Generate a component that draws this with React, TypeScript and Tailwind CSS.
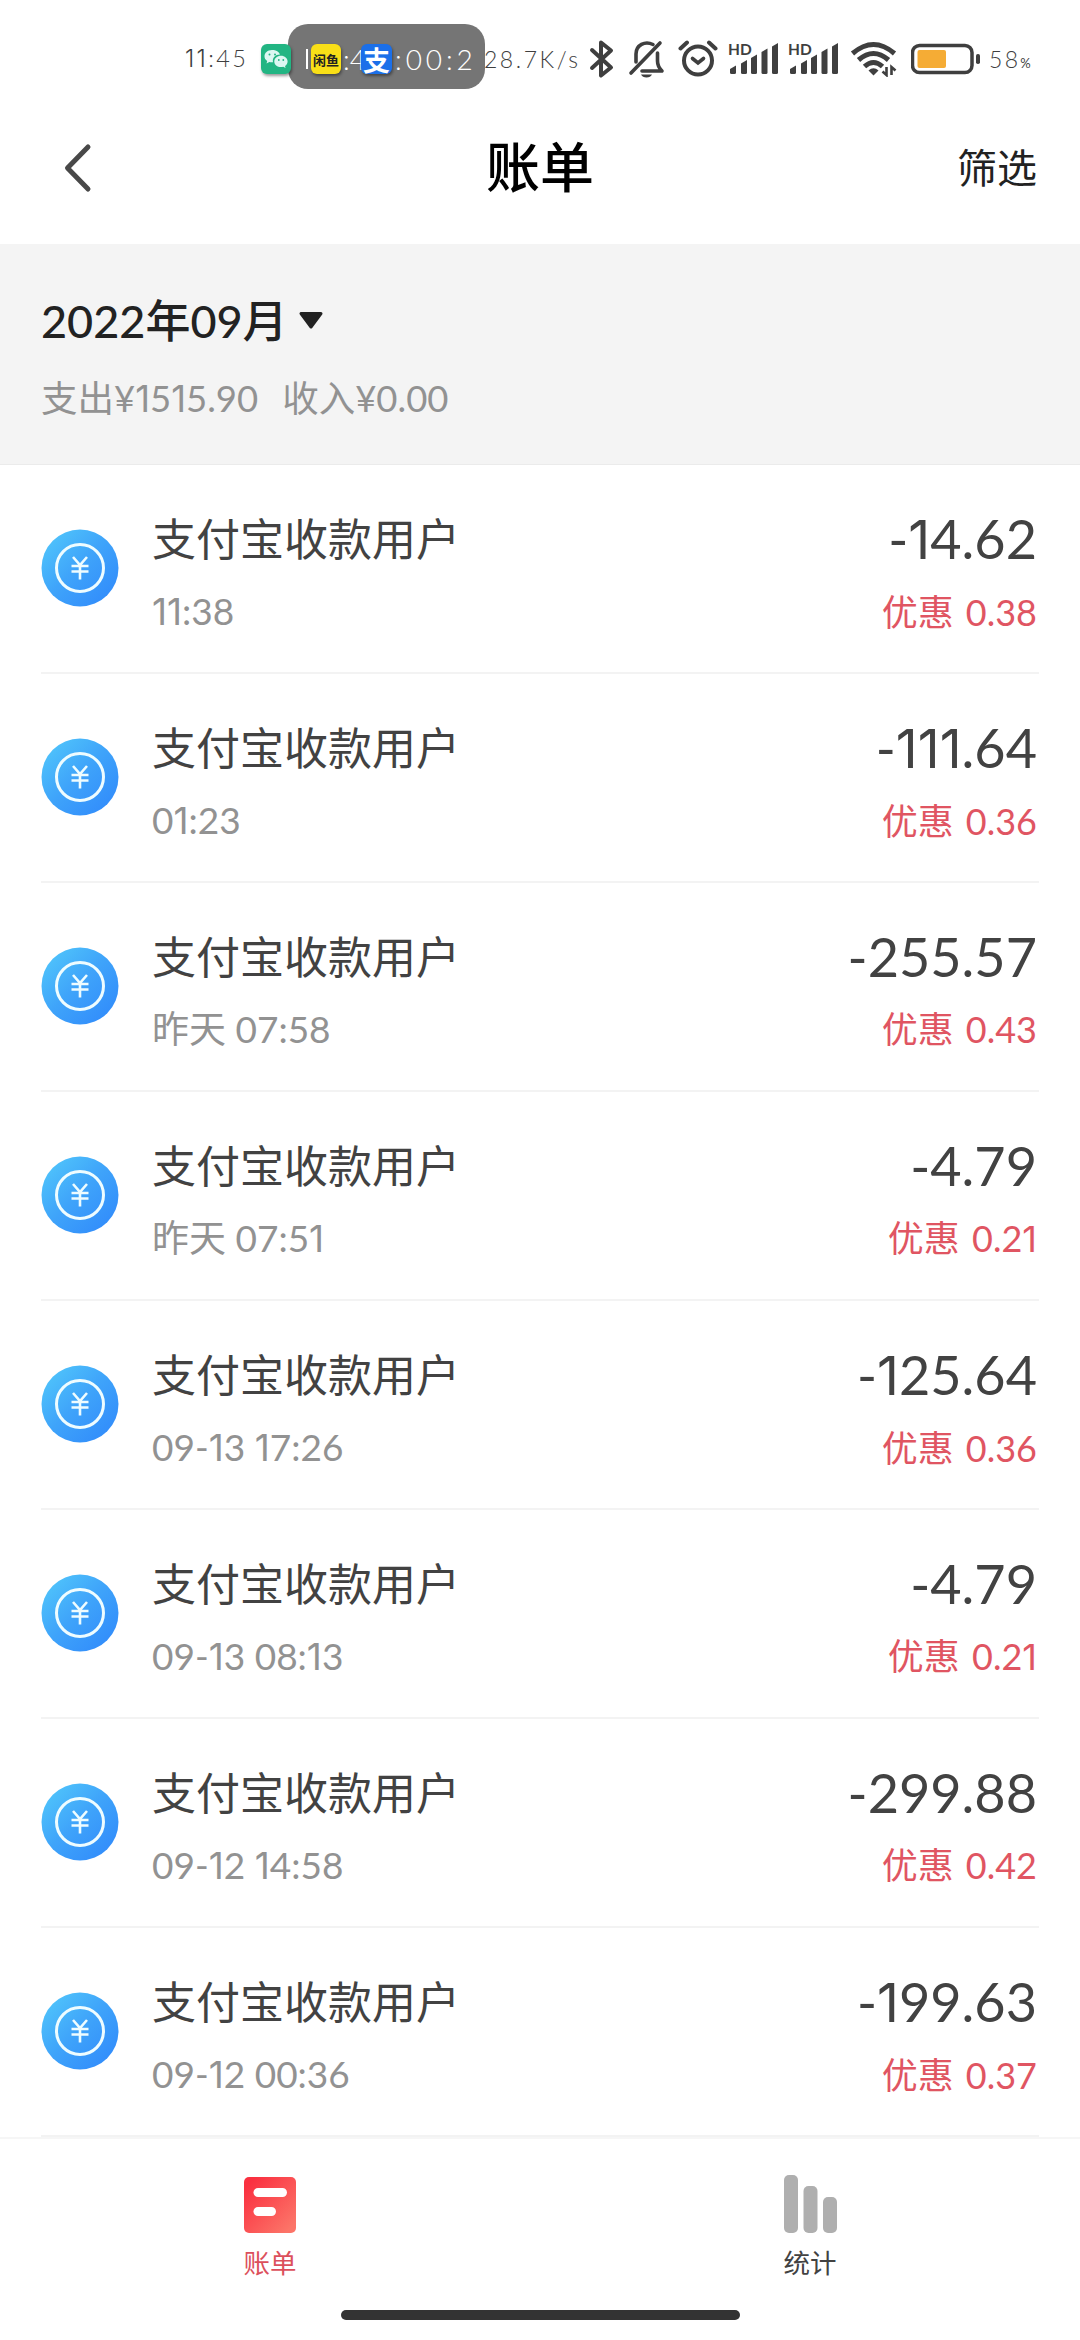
interface Bill {
  time: string;
  amount: string;
  discount: string;
}

const BILLS: Bill[] = [
  { time: '11:38', amount: '-14.62', discount: '0.38' },
  { time: '01:23', amount: '-111.64', discount: '0.36' },
  { time: '昨天 07:58', amount: '-255.57', discount: '0.43' },
  { time: '昨天 07:51', amount: '-4.79', discount: '0.21' },
  { time: '09-13 17:26', amount: '-125.64', discount: '0.36' },
  { time: '09-13 08:13', amount: '-4.79', discount: '0.21' },
  { time: '09-12 14:58', amount: '-299.88', discount: '0.42' },
  { time: '09-12 00:36', amount: '-199.63', discount: '0.37' },
];

// Inter has the narrow "1" without a foot, everything else is Lato
function Digits({ text }: { text: string }) {
  return (
    <>
      {text.split(/(1+)/).map((part, i) =>
        part.startsWith('1') ? (
          <span key={i} className="font-[Inter]">{part}</span>
        ) : (
          part
        ),
      )}
    </>
  );
}

function SignalIcon() {
  return (
    <svg width="50" height="36" viewBox="0 0 50 36" fill="#3f3f3f">
      <text x="0" y="13.500" fontSize="15.500" fontWeight="700" fontFamily="Lato, sans-serif">HD</text>
      <path d="M2 28l6-3.500v7q0 1.500-1.500 1.500h-3q-1.500 0-1.500-1.500z" />
      <path d="M13 22.500l6-3.500v12.500q0 1.500-1.500 1.500h-3q-1.500 0-1.500-1.500z" />
      <path d="M23 17l6-3.500v18q0 1.500-1.500 1.500h-3q-1.500 0-1.500-1.500z" />
      <path d="M33.500 11l6-3.500v24q0 1.500-1.500 1.500h-3q-1.500 0-1.500-1.500z" />
      <path d="M44 5.500l6-3.500v29.500q0 1.500-1.500 1.500h-3q-1.500 0-1.500-1.500z" />
    </svg>
  );
}

function WechatIcon() {
  return (
    <svg width="30" height="30" viewBox="0 0 30 30" className="rounded-[6px] bg-[#22b583] shadow-[1px_2px_3px_rgba(0,0,0,0.4)]">
      <path d="M11 6C6.500 6 3.500 9 3.500 12.300c0 2 1 3.700 2.700 4.800l-.7 2.400 2.800-1.500c.9.200 1.800.3 2.700.3h1c-.9-4.500 2.500-7.700 7-7.700C18.300 8 15 6 11 6z" fill="#dcf7f2" />
      <path d="M20 11.700c-3.800 0-6.700 2.500-6.700 5.700s2.900 5.700 6.700 5.700c.8 0 1.500-.1 2.200-.3l2.400 1.300-.6-2.100c1.600-1.100 2.600-2.700 2.600-4.600 0-3.200-2.900-5.700-6.600-5.700z" fill="#dcf7f2" />
      <g fill="#22b583">
        <circle cx="8.500" cy="10.500" r="1" />
        <circle cx="14" cy="10.500" r="1" />
        <circle cx="17.800" cy="16" r=".9" />
        <circle cx="22.300" cy="16" r=".9" />
      </g>
    </svg>
  );
}

function StatusBar() {
  return (
    <div className="relative h-[92px] shrink-0 text-[#3f3f3f]">
      <div className="flex h-full items-center pl-[185px] pt-[26px]">
        <span className="w-[76px] font-[Lato] text-[23.5px] font-light leading-none tracking-[0.1em] whitespace-nowrap">
          <Digits text="11:45" />
        </span>
        <span className="relative z-10"><WechatIcon /></span>
        <span className="ml-[193px] w-[105px] font-[Lato] text-[23px] font-light leading-none tracking-[0.11em] whitespace-nowrap">
          28.7K/s
        </span>
        {/* bluetooth */}
        <svg width="26" height="40" viewBox="0 0 26 40" fill="none" stroke="#3f3f3f" strokeWidth="4" strokeLinejoin="round" strokeLinecap="round">
          <path d="M3 11l19 17.500-10 8V3.500l10 8L3 29" />
        </svg>
        {/* muted bell */}
        <svg width="38" height="40" viewBox="0 0 38 40" className="ml-[13px]" fill="none" stroke="#3f3f3f" strokeWidth="3.600" strokeLinecap="round" strokeLinejoin="round">
          <path d="M3 34L32 4" />
          <path d="M25 5.500C17 1.500 8 6 8 15v8" />
          <path d="M29.500 14v8c0 4 2 7.500 4.500 10H14" />
          <path d="M13 35.500h11q-1.500 3-5.500 3t-5.500-3z" fill="#3f3f3f" stroke="none" />
        </svg>
        {/* alarm */}
        <svg width="40" height="40" viewBox="0 0 40 40" className="ml-[12px]" fill="none" stroke="#3f3f3f" strokeLinecap="round">
          <circle cx="20" cy="21.500" r="14" strokeWidth="4" />
          <path d="M14.500 19.500l5.500 4.500 5.500-4.500" strokeWidth="3.600" />
          <path d="M2.500 9.500l6.500-6M37.500 9.500L31 3.500" strokeWidth="4" />
        </svg>
        <span className="ml-[10px]"><SignalIcon /></span>
        <span className="ml-[10px]"><SignalIcon /></span>
        {/* wifi */}
        <svg width="48" height="36" viewBox="0 0 48 36" className="ml-[12px]" fill="none" stroke="#3f3f3f" strokeWidth="5">
          <path d="M2.500 12.500q21-18 42 0" />
          <path d="M8.500 19q15-13 30 0" />
          <path d="M14.500 25.500q9-8 18 0" />
          <path d="M18.500 29.500q5-4.500 10 0l-5 5z" fill="#3f3f3f" stroke="none" />
          <path d="M36.500 26v8l-4-3.500M41.500 34v-8l4 3.500" strokeWidth="2.600" />
        </svg>
        {/* battery */}
        <svg width="70" height="32" viewBox="0 0 70 32" className="ml-[13px]">
          <rect x="1.500" y="2.500" width="59.500" height="27" rx="7" fill="none" stroke="#3f3f3f" strokeWidth="3.500" />
          <rect x="6.500" y="7" width="28.500" height="18" rx="2" fill="#f5ac35" />
          <rect x="65" y="11" width="4" height="10" rx="1.800" fill="#3f3f3f" />
        </svg>
        <span className="ml-[8px] font-[Lato] text-[23px] font-light leading-none tracking-[0.1em] whitespace-nowrap">
          58<span className="text-[13px] font-normal">%</span>
        </span>
      </div>

      {/* recording timer floating over the bar */}
      <div className="absolute left-[288px] top-[24px] flex h-[65px] w-[197px] items-center overflow-hidden rounded-[20px] bg-[#757575] pt-[5px] font-[Lato] text-[28px] font-light leading-none text-white">
        <span className="ml-[18px] h-[20px] w-[2px] bg-white" />
        <span className="ml-[3px] flex h-[30px] w-[30px] shrink-0 items-center justify-center rounded-[6px] bg-[#f9df17] font-['Noto_Sans_CJK_SC'] text-[13px] font-bold text-[#222] shadow-[1px_2px_3px_rgba(0,0,0,0.4)]">
          闲鱼
        </span>
        <span className="ml-[2px] w-[18px] whitespace-nowrap">:4</span>
        <span className="z-10 flex h-[30px] w-[31px] shrink-0 items-center justify-center rounded-[6px] bg-[#1b6fe9] font-['Noto_Sans_CJK_SC'] text-[27px] font-bold shadow-[1px_2px_3px_rgba(0,0,0,0.4)]">
          支
        </span>
        <span className="ml-[3px] tracking-[0.14em] whitespace-nowrap">:00:2</span>
      </div>
    </div>
  );
}

function YenIcon() {
  return (
    <svg width="78" height="78" viewBox="0 0 78 78" className="shrink-0">
      <defs>
        <linearGradient id="coin" x1="0.100" y1="0.100" x2="0.850" y2="0.850">
          <stop offset="0" stopColor="#4fc3fb" />
          <stop offset="0.500" stopColor="#3fa4fa" />
          <stop offset="1" stopColor="#338ffb" />
        </linearGradient>
      </defs>
      <circle cx="39" cy="39" r="38.500" fill="url(#coin)" />
      <g fill="none" stroke="#eefcff">
        <circle cx="39" cy="39" r="23.500" strokeWidth="3" />
        <path d="M32 28l7 8 7-8M39 36v14.500M30.500 37h17M30.500 42.500h17" strokeWidth="2.600" />
      </g>
    </svg>
  );
}

function BillRow({ bill }: { bill: Bill }) {
  return (
    <li className="mx-[41px] flex h-[209px] items-start whitespace-nowrap border-b-2 border-[#f3f3f3]">
      <div className="pt-[64px]"><YenIcon /></div>
      <div className="ml-[33px] flex-1 pt-[44px]">
        <p className="text-[44px] leading-[60px] text-[#424242]">支付宝收款用户</p>
        <p className="mt-[18px] text-[37px] leading-[48px] text-[#929292]">
          <Digits text={bill.time} />
        </p>
      </div>
      <div className="pr-[2px] pt-[44px] text-right">
        <p className="text-[54px] leading-[60px] text-[#424242]">
          <Digits text={bill.amount} />
        </p>
        <p className="mt-[18px] text-[36px] leading-[48px] text-[#e05562]">
          <span className="mr-[3px]">优惠</span> <Digits text={bill.discount} />
        </p>
      </div>
    </li>
  );
}

export default function App() {
  return (
    <div className="flex h-[2340px] w-[1080px] flex-col overflow-hidden bg-white font-[Lato,'Noto_Sans_CJK_SC',sans-serif]">
      <StatusBar />

      <header className="grid h-[152px] shrink-0 grid-cols-3 items-center px-[43px]">
        <svg width="70" height="50" viewBox="0 0 70 50" fill="none" stroke="#484848" strokeWidth="5" strokeLinecap="round" strokeLinejoin="round">
          <path d="M45 4L24.500 25 45 46" />
        </svg>
        <h1 className="text-center text-[54px] font-medium leading-none text-black">账单</h1>
        <span className="text-right text-[40px] leading-none text-[#222]">筛选</span>
      </header>

      <section className="h-[221px] shrink-0 border-b border-[#ebebeb] bg-[#f4f4f4] pl-[41px] pt-[45px]">
        <div className="flex items-center">
          <span className="text-[45px] font-medium leading-[64px] text-[#222]">2022年09月</span>
          <svg width="26" height="22" viewBox="0 0 26 22" className="ml-[10px]">
            <path d="M3 3.500h20L13 17z" fill="#222" stroke="#222" strokeWidth="3" strokeLinejoin="round" />
          </svg>
        </div>
        <p className="mt-[20px] flex gap-[24px] text-[36.5px] leading-[50px] text-[#929292]">
          <span>支出¥<Digits text="1515.90" /></span>
          <span>收入¥0.00</span>
        </p>
      </section>

      <ul className="min-h-0 flex-1 overflow-hidden">
        {BILLS.map((bill) => (
          <BillRow key={bill.time} bill={bill} />
        ))}
      </ul>

      <nav className="flex h-[203px] shrink-0 flex-col items-center border-t-2 border-[#f6f6f6]">
        <div className="grid w-full grid-cols-2 pt-[36px]">
          <div className="flex flex-col items-center text-[26.5px] leading-[36px] text-[#dc505c]">
            <svg width="54" height="60" viewBox="0 0 54 60">
              <defs>
                <linearGradient id="tab" x1="0" y1="0" x2="1" y2="1">
                  <stop offset="0.100" stopColor="#fa3040" />
                  <stop offset="0.900" stopColor="#fc7468" />
                </linearGradient>
              </defs>
              <rect x="1" y="2" width="52" height="56" rx="5" fill="url(#tab)" />
              <rect x="10.500" y="13" width="33.500" height="9" rx="4.500" fill="#fff" />
              <rect x="10.500" y="32" width="22.500" height="9" rx="4.500" fill="#fff" />
            </svg>
            <span className="mt-[10px]">账单</span>
          </div>
          <div className="flex flex-col items-center text-[26.5px] leading-[36px] text-[#424242]">
            <svg width="54" height="60" viewBox="0 0 54 60" fill="#afafaf">
              <rect x="1" y="0" width="14" height="58" rx="5" />
              <rect x="20.500" y="11" width="14" height="47" rx="5" />
              <rect x="40" y="22" width="14" height="36" rx="5" />
            </svg>
            <span className="mt-[10px]">统计</span>
          </div>
        </div>
        <div className="mt-[29px] h-[10px] w-[399px] rounded-full bg-[#333]" />
      </nav>
    </div>
  );
}
